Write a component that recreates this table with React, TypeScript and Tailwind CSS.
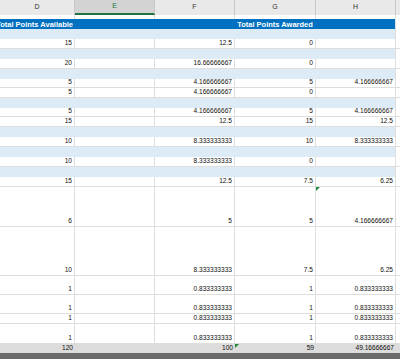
import type { ReactNode } from 'react';

type Row =
  | { kind: 'band' }
  | { kind: 'data'; h: number; v: (string | number)[]; flag?: number; total?: boolean };

const widths = ['w-[75px]', 'w-[80px]', 'w-[80px]', 'w-[81px]', 'w-[80px]'];
const letters = ['D', 'E', 'F', 'G', 'H'];

const r = (h: number, v: (string | number)[], flag?: number): Row => ({ kind: 'data', h, v, flag });
const band: Row = { kind: 'band' };
const third = [1, '', '0.833333333', 1, '0.833333333'];

const rows: Row[] = [
  band,
  r(10, [15, '', 12.5, 0, '']),
  band,
  r(10, [20, '', '16.66666667', 0, '']),
  band,
  r(9, [5, '', '4.166666667', 5, '4.166666667']),
  r(10, [5, '', '4.166666667', 0, '']),
  band,
  r(9, [5, '', '4.166666667', 5, '4.166666667']),
  r(10, [15, '', 12.5, 15, 12.5]),
  band,
  r(10, [10, '', '8.333333333', 10, '8.333333333']),
  band,
  r(10, [10, '', '8.333333333', 0, '']),
  band,
  r(10, [15, '', 12.5, 7.5, 6.25]),
  r(40, [6, '', 5, 5, '4.166666667'], 4),
  r(49, [10, '', '8.333333333', 7.5, 6.25]),
  r(19, third),
  r(19, third),
  r(10, third),
  r(20, third),
];

const heights: Record<number, string> = {
  9: 'h-[9px]',
  10: 'h-[10px]',
  19: 'h-[19px]',
  20: 'h-[20px]',
  40: 'h-[40px]',
  49: 'h-[49px]',
};

function Flag() {
  return (
    <span className="absolute left-0 top-0 h-0 w-0 border-t-[4px] border-r-[4px] border-t-[#1e8a3c] border-r-transparent" />
  );
}

function DataRow({ row }: { row: Extract<Row, { kind: 'data' }> }) {
  return (
    <div className={`flex ${heights[row.h]} ${row.total ? 'bg-[#dcdcdc]' : 'bg-white border-b border-[#dedede]'}`}>
      {row.v.map((val, i) => (
        <div
          key={i}
          className={`relative ${widths[i]} shrink-0 flex items-end justify-end pr-[2px] ${
            row.total ? '' : 'border-r border-[#dedede]'
          }`}
        >
          {row.flag === i && <Flag />}
          <span className="leading-none pb-[1px]">{val}</span>
        </div>
      ))}
      <div className="flex-1" />
    </div>
  );
}

function Sheet({ children }: { children: ReactNode }) {
  return (
    <div
      className="w-[400px] h-[359px] overflow-hidden bg-white text-[6.6px] text-[#111]"
      style={{ fontFamily: '"Liberation Sans", Arial, sans-serif' }}
    >
      {children}
    </div>
  );
}

export default function App() {
  return (
    <Sheet>
      {/* column letters */}
      <div className="flex h-[15px] bg-[#e9e9e9] text-[7px] text-[#333]">
        {letters.map((l, i) => (
          <div
            key={l}
            className={`${widths[i]} shrink-0 flex items-center justify-center border-r border-[#c8c8c8] ${
              l === 'E' ? 'bg-[#d3d3d3] text-[#217346] border-b-2 border-b-[#217346]' : ''
            }`}
          >
            {l}
          </div>
        ))}
        <div className="flex-1" />
      </div>

      {/* sliver of the row above */}
      <div className="flex h-[4px]">
        {widths.map((w, i) => (
          <div key={i} className={`${w} shrink-0 border-r border-[#dedede]`} />
        ))}
      </div>

      {/* section headers */}
      <div className="flex h-[10px] text-white font-bold text-[7.5px]">
        <div className="w-[395px] shrink-0 flex bg-[#0070c0]">
          <div className="w-[75px] shrink-0 flex items-end justify-end pr-[2px] whitespace-nowrap">
            <span className="leading-none pb-[1px]">Total Points Available</span>
          </div>
          <div className="w-[80px] shrink-0" />
          <div className="w-[240px] shrink-0 flex items-end justify-center whitespace-nowrap">
            <span className="leading-none pb-[1px]">Total Points Awarded</span>
          </div>
        </div>
        <div className="flex-1 border-l border-[#dedede]" />
      </div>

      {rows.map((row, idx) =>
        row.kind === 'band' ? (
          <div key={idx} className="flex h-[10px]">
            <div className="w-[395px] shrink-0 bg-[#ddebf7]" />
            <div className="flex-1 border-l border-[#dedede]" />
          </div>
        ) : (
          <DataRow key={idx} row={row} />
        ),
      )}

      <DataRow row={{ kind: 'data', h: 9, v: [120, '', 100, 59, '49.16666667'], flag: 3, total: true }} />
      <div className="h-[6px] bg-[#6b6b6b]" />
    </Sheet>
  );
}
